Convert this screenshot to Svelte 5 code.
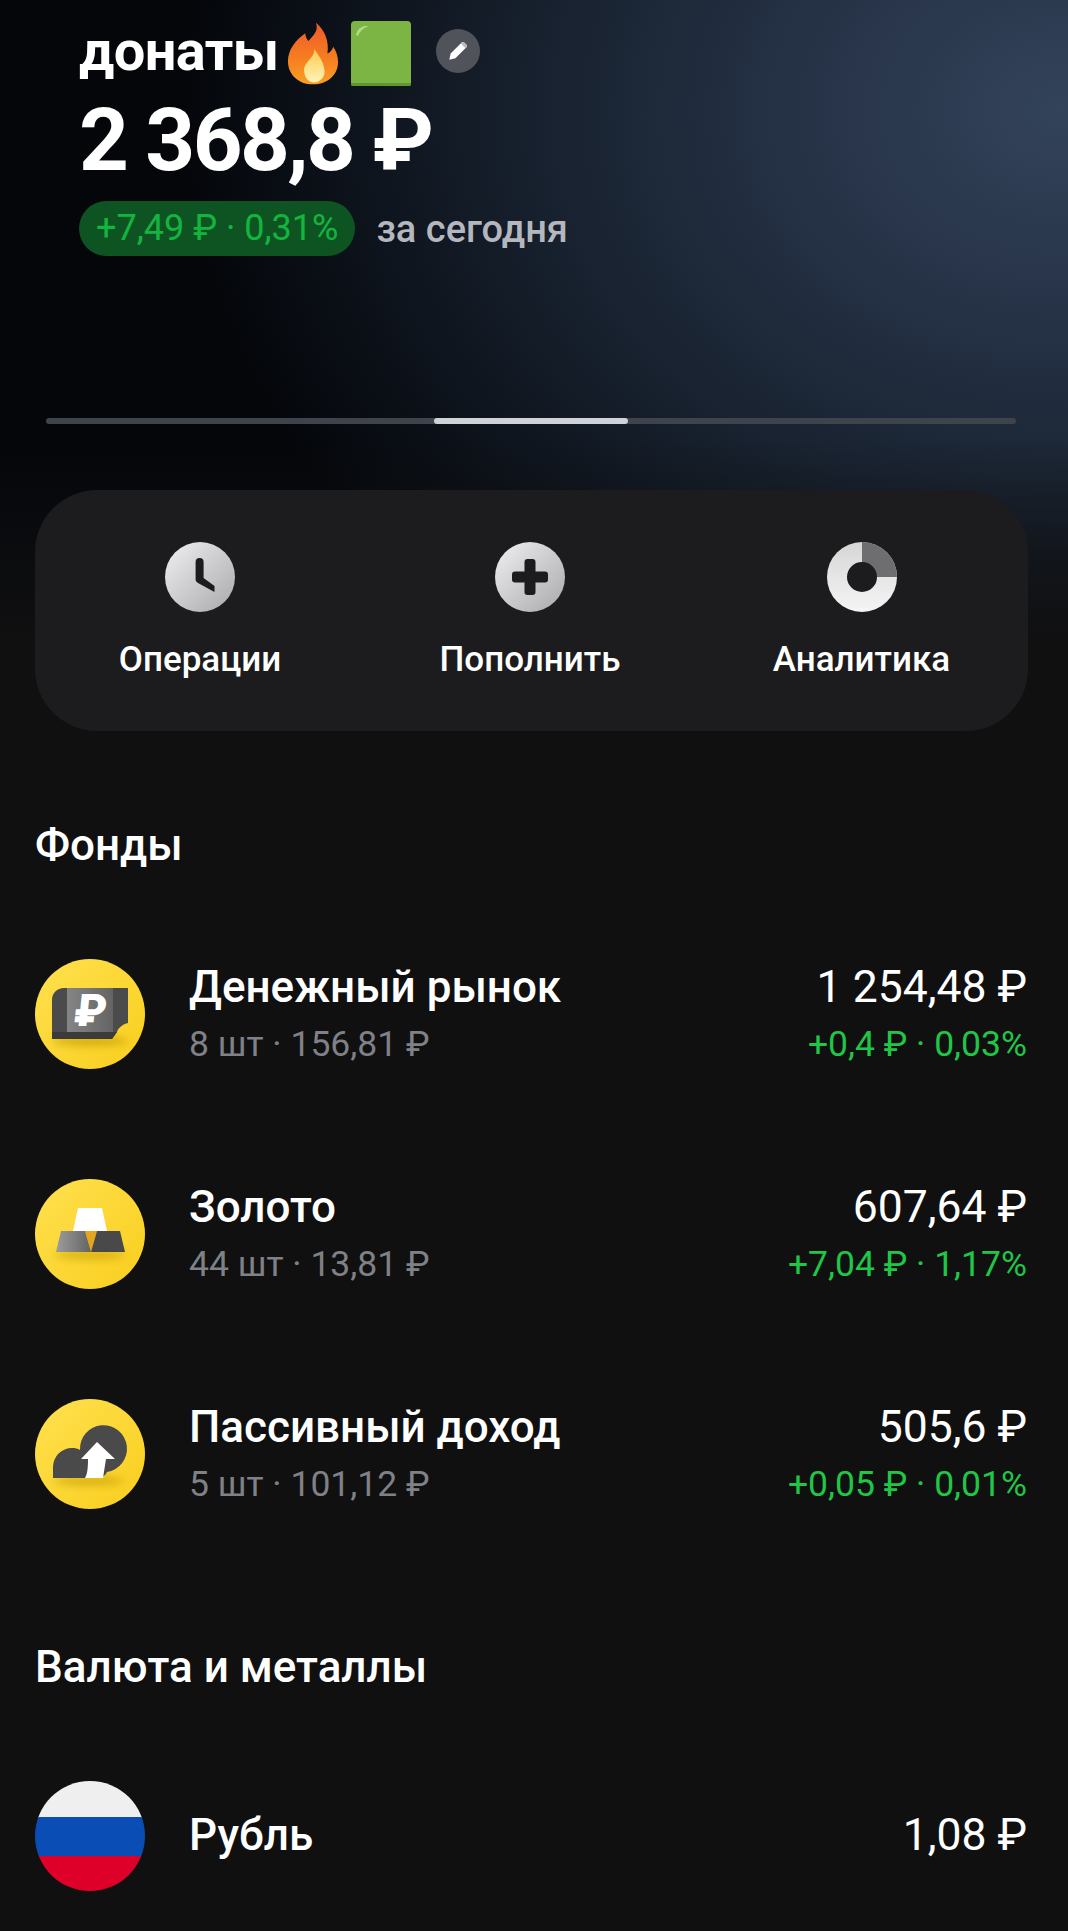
<script>
  const funds = [
    { name: 'Денежный рынок', sub: '8 шт · 156,81 ₽', value: '1 254,48 ₽', delta: '+0,4 ₽ · 0,03%', kind: 'money' },
    { name: 'Золото', sub: '44 шт · 13,81 ₽', value: '607,64 ₽', delta: '+7,04 ₽ · 1,17%', kind: 'gold' },
    { name: 'Пассивный доход', sub: '5 шт · 101,12 ₽', value: '505,6 ₽', delta: '+0,05 ₽ · 0,01%', kind: 'cloud' }
  ];
</script>

<div class="page">
  <section class="hero">
    <div class="head">
      <div class="title">
        <span class="name">донаты</span>
        <svg class="flame" viewBox="0 0 54 66" aria-hidden="true">
          <defs>
            <linearGradient id="fl" x1="0" y1="0" x2="0" y2="1">
              <stop offset="0" stop-color="#f0592c" />
              <stop offset="0.55" stop-color="#f57c20" />
              <stop offset="1" stop-color="#fb9f24" />
            </linearGradient>
            <linearGradient id="fi" x1="0" y1="0" x2="0" y2="1">
              <stop offset="0" stop-color="#fdc94e" />
              <stop offset="1" stop-color="#fff3b8" />
            </linearGradient>
          </defs>
          <path fill="url(#fl)" d="M30 1c3 8-2 13-8 19-2-3-3-5-3-8C9 19 1 29 1 41c0 14 11 24 26 24s26-10 26-23c0-6-2-12-5-16-1 3-3 6-6 7 2-13-3-25-12-32z" />
          <path fill="url(#fi)" d="M28 28c1 6-3 9-7 14-3 4-4 7-3 11 1 6 5 10 10 10s11-4 11-11c0-9-6-17-11-24z" />
        </svg>
        <svg class="square" viewBox="0 0 60 65" aria-hidden="true">
          <rect width="60" height="65" rx="4" fill="#7db544" />
          <path d="M5 14c1-5 4-8 9-9l4 0c-6 2-9 5-11 10z" fill="#b5d98c" />
          <rect y="62" width="60" height="3" rx="1.5" fill="#5f9634" />
        </svg>
        <span class="edit">
          <svg viewBox="0 0 24 24" aria-hidden="true">
            <path fill="#fff" d="M4 20l1.2-5.6L15.4 4.2a1.6 1.6 0 0 1 2.3 0l2.1 2.1a1.6 1.6 0 0 1 0 2.3L9.6 18.8z" />
            <path fill="#b7bac0" d="M14.6 5L15.4 4.2a1.6 1.6 0 0 1 2.3 0l2.1 2.1a1.6 1.6 0 0 1 0 2.3l-.8.8z" />
          </svg>
        </span>
      </div>
      <div class="amount">2 368,8 ₽</div>
      <div class="today">
        <span class="pill">+7,49 ₽ · 0,31%</span>
        <span class="label">за сегодня</span>
      </div>
    </div>

    <div class="track"><span class="thumb"></span></div>

    <div class="actions">
      <div class="action">
        <svg class="aicon" viewBox="0 0 70 70" aria-hidden="true">
          <defs>
            <linearGradient id="ag" x1="0" y1="0" x2="1" y2="1">
              <stop offset="0" stop-color="#f0f0f1" />
              <stop offset="1" stop-color="#a9a9ac" />
            </linearGradient>
          </defs>
          <circle cx="35" cy="35" r="35" fill="url(#ag)" />
          <path d="M30.6 20a4 4 0 0 1 8 0V36L49.5 44V50L33 41a4 4 0 0 1-2.4-3z" fill="#1c1c1e" />
        </svg>
        <span>Операции</span>
      </div>
      <div class="action">
        <svg class="aicon" viewBox="0 0 70 70" aria-hidden="true">
          <circle cx="35" cy="35" r="35" fill="url(#ag)" />
          <rect x="29.5" y="17" width="11" height="36" rx="3" fill="#1c1c1e" />
          <rect x="17" y="29.5" width="36" height="11" rx="3" fill="#1c1c1e" />
        </svg>
        <span>Пополнить</span>
      </div>
      <div class="action">
        <svg class="aicon" viewBox="0 0 70 70" aria-hidden="true">
          <defs>
            <linearGradient id="ad" x1="0" y1="0" x2="0" y2="1">
              <stop offset="0" stop-color="#d6d6d7" />
              <stop offset="1" stop-color="#f5f5f5" />
            </linearGradient>
          </defs>
          <circle cx="35" cy="35" r="35" fill="url(#ad)" />
          <path d="M35 0a35 35 0 0 1 35 35H35z" fill="#6e6e71" />
          <circle cx="35" cy="35" r="15" fill="#1c1c1e" />
        </svg>
        <span>Аналитика</span>
      </div>
    </div>
  </section>

  <h2 class="section first">Фонды</h2>
  <div class="rows">
    {#each funds as f}
      <div class="row">
        <svg class="ricon" viewBox="0 0 110 110" aria-hidden="true">
          <defs>
            <linearGradient id="y-{f.kind}" x1="0" y1="0" x2="1" y2="1">
              <stop offset="0" stop-color="#ffe14f" />
              <stop offset="1" stop-color="#f9ce1d" />
            </linearGradient>
            <linearGradient id="g-{f.kind}" x1="0" y1="0" x2="1" y2="0">
              <stop offset="0" stop-color={f.kind === 'money' ? '#858585' : '#9c9c9c'} />
              <stop offset="1" stop-color="#646464" />
            </linearGradient>
            <filter id="b-{f.kind}" x="-30%" y="-100%" width="160%" height="300%">
              <feGaussianBlur stdDeviation="4" />
            </filter>
          </defs>
          <circle cx="55" cy="55" r="55" fill="url(#y-{f.kind})" />
          {#if f.kind === 'money'}
            <ellipse cx="55" cy="82" rx="38" ry="5" fill="#bf9600" opacity="0.65" filter="url(#b-money)" />
            <path d="M17 41c0-7 5-12 12-12h64v35c-5 1-10 5-11 9l-5 7H17z" fill="#4b4b4b" />
            <path d="M17 73h65l-5 7H17z" fill="#3b3b3b" />
            <path d="M32 29h46v44H32z" fill="url(#g-money)" />
            <text x="55" y="67" class="rub" transform="skewX(-6) translate(6 0)">₽</text>
          {:else if f.kind === 'gold'}
            <ellipse cx="55" cy="76" rx="36" ry="4" fill="#bf9600" opacity="0.65" filter="url(#b-gold)" />
            <path d="M43 29h24l5 23H38z" fill="#fff" />
            <path d="M50 52h12l-6 21z" fill="#e5a51c" />
            <path d="M26 52h24l6 21H21z" fill="url(#g-gold)" />
            <path d="M62 52h23l5 21H56z" fill="#494949" />
          {:else}
            <ellipse cx="54" cy="82" rx="36" ry="4" fill="#bf9600" opacity="0.65" filter="url(#b-cloud)" />
            <path d="M18 79V68a19 19 0 0 1 19-19c3 0 6 .5 8 2A23.5 23.5 0 1 1 72 73C70 77 66 79 62 79z" fill="#4a4a4a" />
            <path d="M62 43L80 60H71L68 79H50C52 75 53 71 53 60H46z" fill="#fff" />
          {/if}
        </svg>
        <div class="info">
          <div class="main">{f.name}</div>
          <div class="sub">{f.sub}</div>
        </div>
        <div class="nums">
          <div class="value">{f.value}</div>
          <div class="delta">{f.delta}</div>
        </div>
      </div>
    {/each}
  </div>

  <h2 class="section second">Валюта и металлы</h2>
  <div class="row single">
    <svg class="ricon" viewBox="0 0 110 110" aria-hidden="true">
      <defs><clipPath id="cc"><circle cx="55" cy="55" r="55" /></clipPath></defs>
      <g clip-path="url(#cc)">
        <rect width="110" height="37" fill="#efefef" />
        <rect y="36" width="110" height="40" fill="#0a4db5" />
        <rect y="75" width="110" height="35" fill="#de0029" />
      </g>
    </svg>
    <div class="info"><div class="main">Рубль</div></div>
    <div class="nums"><div class="value">1,08 ₽</div></div>
  </div>
</div>

<style>
  :global(body) {
    margin: 0;
    background: #101011;
  }
  .page {
    width: 1068px;
    height: 1931px;
    overflow: hidden;
    background: #101011;
    color: #fff;
    font-family: Roboto, "Noto Sans", sans-serif;
  }
  .hero {
    padding: 0 40px 0 35px;
    background:
      linear-gradient(to bottom, rgba(16, 16, 17, 0) 440px, #101011 640px),
      radial-gradient(ellipse 880px 700px at 1060px 110px, #33435a 0%, #28354a 25%, #182230 58%, rgba(5, 7, 10, 0) 100%),
      #04060a;
  }
  .head {
    padding-left: 44px;
    height: 257px;
  }
  .title {
    display: flex;
    align-items: center;
    height: 86px;
    padding-top: 20px;
    box-sizing: border-box;
    font-size: 56px;
    font-weight: 700;
    line-height: 1;
    letter-spacing: -0.6px;
  }
  .name {
    padding-bottom: 4px;
  }
  .flame {
    width: 52px;
    height: 65px;
    margin-left: 8px;
    flex: none;
  }
  .square {
    width: 60px;
    height: 65px;
    margin-left: 12px;
    flex: none;
  }
  .edit {
    width: 44px;
    height: 44px;
    border-radius: 50%;
    background: #50535a;
    margin: -5px 0 0 25px;
    display: flex;
    align-items: center;
    justify-content: center;
    flex: none;
  }
  .edit svg {
    width: 26px;
    height: 26px;
  }
  .amount {
    font-size: 87px;
    font-weight: 700;
    line-height: 100px;
    margin-top: 4px;
    white-space: nowrap;
    letter-spacing: -2.6px;
  }
  .today {
    display: flex;
    align-items: center;
    gap: 21px;
    margin-top: 11px;
  }
  .pill {
    height: 55px;
    padding: 0 17px;
    border-radius: 28px;
    background: #0e5423;
    color: #14b53f;
    font-size: 36px;
    line-height: 55px;
    white-space: nowrap;
  }
  .label {
    color: #b4b7bd;
    font-size: 38px;
    font-weight: 500;
  }
  .track {
    height: 6px;
    margin: 161px 0 0 11px;
    width: 970px;
    border-radius: 3px;
    background: #3e434c;
    padding-left: 388px;
    box-sizing: border-box;
  }
  .thumb {
    display: block;
    width: 194px;
    height: 6px;
    border-radius: 3px;
    background: #cfd2d6;
  }
  .actions {
    margin-top: 66px;
    height: 241px;
    width: 993px;
    box-sizing: border-box;
    border-radius: 62px;
    background: #1c1c1e;
    display: grid;
    grid-template-columns: 330px 330px 333px;
    padding-top: 52px;
  }
  .action {
    display: flex;
    flex-direction: column;
    align-items: center;
    font-size: 35px;
    font-weight: 500;
    line-height: 40px;
  }
  .aicon {
    width: 70px;
    height: 70px;
    margin-bottom: 28px;
  }
  .section {
    margin: 0;
    padding-left: 35px;
    font-size: 44px;
    font-weight: 500;
    line-height: 48px;
  }
  .section.first {
    margin-top: 90px;
  }
  .rows {
    margin-top: 90px;
  }
  .row {
    display: flex;
    align-items: center;
    padding: 0 41px 0 35px;
  }
  .rows .row {
    height: 110px;
    margin-bottom: 110px;
  }
  .rows .row:last-child {
    margin-bottom: 134px;
  }
  .row.single {
    height: 110px;
    margin-top: 90px;
  }
  .ricon {
    width: 110px;
    height: 110px;
    flex: none;
  }
  .rub {
    font-family: Roboto, sans-serif;
    font-weight: 900;
    font-size: 45px;
    fill: #fff;
    text-anchor: middle;
  }
  .info {
    margin-left: 44px;
    flex: 1;
    min-width: 0;
  }
  .nums {
    text-align: right;
    white-space: nowrap;
  }
  .main {
    font-size: 44px;
    font-weight: 500;
    line-height: 50px;
    position: relative;
    top: -1px;
  }
  .value {
    font-size: 44.5px;
    line-height: 50px;
    position: relative;
    top: -1px;
  }
  .sub {
    font-size: 35.5px;
    line-height: 42px;
    margin-top: 10px;
    color: #7f8186;
  }
  .delta {
    font-size: 35.5px;
    line-height: 42px;
    margin-top: 10px;
    color: #20c646;
  }
</style>
